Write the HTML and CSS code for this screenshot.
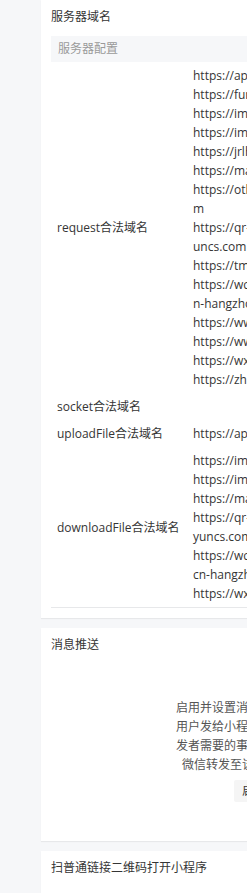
FILE: index.html
```html
<!DOCTYPE html>
<html lang="zh-CN">
<head>
  <meta charset="UTF-8" />
  <meta name="viewport" content="width=device-width, initial-scale=1.0" />
  <title>开发设置</title>
  <link rel="stylesheet" href="styles.css">
</head>
<body>
  <div class="page">
    <div class="card">
      <h2 class="card-title">服务器域名</h2>
      <div class="domain-table">
        <div class="table-head">服务器配置</div>

        <div class="row">
          <div class="label">request合法域名</div>
          <div class="urls">
            https://api.mch.weixin.qq.com<br>
            https://fundebug.com<br>
            https://img.yzcdn.cn<br>
            https://imgcache.qq.com<br>
            https://jrlh.net.cn<br>
            https://mall.example.com<br>
            https://otheve.beacon.qq.co<br>
            m<br>
            https://qr-code.oss-cn-hangzhou.aliy<br>
            uncs.com<br>
            https://tmapi.jdcloud.com<br>
            https://wcxcx.oss-c<br>
            n-hangzhou.aliyuncs.com<br>
            https://www.wxapp.cn<br>
            https://www.example.com<br>
            https://wxapi.example.com<br>
            https://zhuge.io
          </div>
        </div>

        <div class="row">
          <div class="label">socket合法域名</div>
          <div class="urls"></div>
        </div>

        <div class="row">
          <div class="label">uploadFile合法域名</div>
          <div class="urls">https://api.example.com</div>
        </div>

        <div class="row">
          <div class="label">downloadFile合法域名</div>
          <div class="urls">
            https://img.yzcdn.cn<br>
            https://imgcache.qq.com<br>
            https://mall.example.com<br>
            https://qr-code.oss-cn-hangzhou.ali<br>
            yuncs.com<br>
            https://wcxcx.oss-<br>
            cn-hangzhou.aliyuncs.com<br>
            https://wxapi.example.com
          </div>
        </div>
      </div>
    </div>

    <div class="card">
      <h2 class="card-title">消息推送</h2>
      <div class="empty">
        <p class="empty-text">启用并设置消息推送配置后，用户发给小程序的消息以及开发者需要的事件推送，都将被微信转发至该服务器地址中</p>
        <button class="btn">启用</button>
      </div>
    </div>

    <div class="card">
      <h2 class="card-title">扫普通链接二维码打开小程序</h2>
      <div class="empty"></div>
    </div>
  </div>
</body>
</html>
```

FILE: styles.css
```css
body {
  margin: 0;
  background: #f6f7f9;
  font-family: "Open Sans", "Noto Sans CJK SC", sans-serif;
  font-size: 12px;
  line-height: 19px;
  color: #353535;
  overflow: hidden;
}
.page {
  padding-left: 41px;
  width: 426px;
}
.card {
  background: #fff;
  padding: 7px 10px 10px;
  margin-bottom: 10px;
  box-shadow: 0 1px 1px rgba(0,0,0,0.06);
}
.card-title {
  margin: 0;
  font-size: 12px;
  font-weight: normal;
  line-height: 19px;
  color: #353535;
}
.domain-table {
  margin-top: 10px;
  border-bottom: 1px solid #e7e8ea;
}
.table-head {
  background: #f6f7f9;
  color: #9a9a9a;
  height: 26px;
  line-height: 26px;
  padding: 0 7px;
}
.row {
  display: grid;
  grid-template-columns: 136px 1fr;
  align-items: center;
}
.label {
  padding: 4px 6px;
}
.urls {
  padding: 4px 6px;
  white-space: nowrap;
  min-height: 19px;
}
.empty {
  padding: 44px 0 29px;
  text-align: center;
}
.empty-text {
  width: 156px;
  margin: 0 auto;
  line-height: 19px;
  color: #555;
}
.btn {
  margin-top: 6px;
  height: 22px;
  padding: 0 8px;
  border: none;
  border-radius: 2px;
  background: #f5f5f5;
  color: #353535;
  font-family: inherit;
  font-size: 12px;
  line-height: 22px;
}
```
